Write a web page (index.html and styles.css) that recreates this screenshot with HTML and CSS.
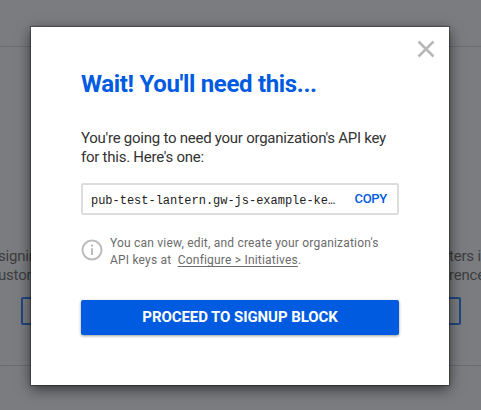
FILE: index.html
```
<!DOCTYPE html>
<html lang="en">
<head>
<meta charset="utf-8">
<title>API key</title>
<link rel="stylesheet" href="styles.css">
</head>
<body>
<div class="page">
  <header class="topbar"></header>
  <main class="cards">
    <section class="card card-left">
      <p>signing<br>ustom</p>
      <div class="outline-button"></div>
    </section>
    <section class="card card-right">
      <p>ters in<br>rence</p>
      <div class="outline-button"></div>
    </section>
  </main>
  <footer class="footer"></footer>
</div>
<div class="overlay">
  <div class="modal" role="dialog">
    <svg class="close" width="18" height="18" viewBox="0 0 18 18"><path d="M1.5 1.5 16.5 16.5M16.5 1.5 1.5 16.5"/></svg>
    <h1>Wait! You'll need this...</h1>
    <p class="lead">You're going to need your organization's API key<br>for this. Here's one:</p>
    <div class="field">
      <span class="key">pub-test-lantern.gw-js-example-ke…</span>
      <span class="copy">COPY</span>
    </div>
    <div class="hint">
      <svg class="info" width="22" height="22" viewBox="0 0 22 22"><circle cx="11" cy="11" r="9.5"/><path d="M11 9.3V16M11 5.6V7.5"/></svg>
      <p>You can view, edit, and create your organization's<br>API keys at&nbsp; <a>Configure &gt; Initiatives</a>.</p>
    </div>
    <div class="proceed">PROCEED TO SIGNUP BLOCK</div>
  </div>
</div>
</body>
</html>
```
FILE: styles.css
```
* { box-sizing: border-box; }
body {
  margin: 0;
  height: 410px;
  overflow: hidden;
  font-family: Roboto, "Liberation Sans", sans-serif;
  background: #7b7c80;
}
p, h1 { margin: 0; white-space: nowrap; }
.page { height: 410px; display: flex; flex-direction: column; }
.topbar { height: 47px; border-bottom: 1px solid #6b6c6f; }
.cards {
  height: 319px;
  border-bottom: 1px solid #6b6c6f;
  display: flex;
  justify-content: space-between;
  padding-top: 200px;
}
.card { width: 160px; font-size: 15px; line-height: 19px; letter-spacing: -.2px; color: #3b3c3e; }
.card p { margin-left: -2px; }
.card-right { width: 33px; }
.card-right p { margin-left: 1px; }
.outline-button {
  height: 28px;
  margin-top: 12px;
  border: 2px solid #1f4681;
  border-radius: 2px;
}
.card-left .outline-button { margin-left: 21px; }
.card-right .outline-button { width: 113px; margin-left: -100px; }
.overlay {
  position: absolute;
  inset: 0;
  display: grid;
  place-items: start center;
  padding: 27px 1px 0 0;
}
.modal {
  position: relative;
  width: 418px;
  height: 358px;
  padding: 42px 50px 50px;
  background: #fff;
  box-shadow: 0 0 1px 1px rgba(0,0,0,.3), 0 4px 13px rgba(0,0,0,.6);
}
.close { position: absolute; top: 13px; right: 14px; fill: none; stroke: #b8b8b8; stroke-width: 2.6; }
h1 { font-size: 24px; line-height: 30px; font-weight: 700; letter-spacing: -.33px; color: #005be0; }
.lead { margin-top: 30px; font-size: 15px; line-height: 19px; letter-spacing: -.25px; color: #333; }
.field {
  display: flex;
  align-items: center;
  justify-content: space-between;
  width: 318px;
  height: 32px;
  margin-top: 16px;
  padding: 0 10px 0 8px;
  border: 2px solid #ddd;
  border-radius: 2px;
}
.key { font: 12px/16px "Liberation Mono", monospace; color: #222; padding-top: 3px; letter-spacing: -.02px; }
.copy { font-size: 13px; line-height: 16px; font-weight: 500; letter-spacing: -.3px; color: #005be0; }
.hint { display: flex; gap: 8px; margin-top: 20px; font-size: 12px; line-height: 17px; letter-spacing: .2px; color: #6b6b6b; }
.info { margin-top: 4px; margin-right: -1px; fill: none; stroke: #bcbcbc; stroke-width: 2; }
.hint a { text-decoration: underline; text-underline-offset: 2px; }
.proceed {
  display: grid;
  place-items: center;
  height: 35px;
  margin-top: 31px;
  padding-bottom: 1px;
  border-radius: 2px;
  background: #005be0;
  box-shadow: 0 1px 3px rgba(0,0,0,.4);
  color: #fff;
  font-size: 15px;
  line-height: 20px;
  font-weight: 700;
  letter-spacing: -.08px;
}
```
